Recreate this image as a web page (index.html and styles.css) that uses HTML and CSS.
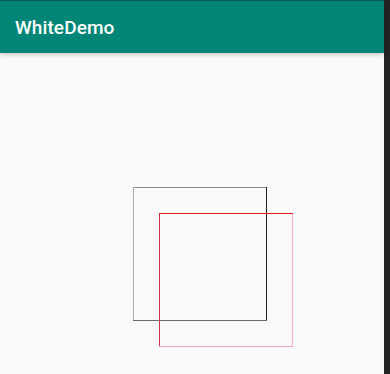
FILE: index.html
```html
<!DOCTYPE html>
<html lang="en">
<head>
  <meta charset="UTF-8" />
  <meta name="viewport" content="width=device-width, initial-scale=1.0" />
  <title>WhiteDemo</title>
  <link rel="stylesheet" href="styles.css">
</head>
<body>
  <div class="screen">
    <div class="app">
      <div class="statusline"></div>
      <header class="toolbar">
        <h1>WhiteDemo</h1>
      </header>
      <main class="canvas">
        <svg width="384" height="321" viewBox="0 0 384 321" shape-rendering="crispEdges">
          <!-- black square -->
          <line x1="133" y1="134.5" x2="267" y2="134.5" stroke="#8a8a8a" />
          <line x1="133.5" y1="134" x2="133.5" y2="268" stroke="#a8a8a8" />
          <line x1="266.5" y1="134" x2="266.5" y2="268" stroke="#1e1e1e" />
          <line x1="133" y1="267.5" x2="267" y2="267.5" stroke="#6a6a6a" />
          <!-- red square -->
          <line x1="159.5" y1="160" x2="159.5" y2="294" stroke="#cc3344" />
          <line x1="292.5" y1="160" x2="292.5" y2="294" stroke="#f6b0b8" />
          <line x1="159" y1="293.5" x2="293" y2="293.5" stroke="#f2a6b2" />
          <line x1="159" y1="160.5" x2="293" y2="160.5" stroke="#dd1a22" />
        </svg>
      </main>
    </div>
    <div class="edge"></div>
  </div>
</body>
</html>
```

FILE: styles.css
```css
body { margin: 0; background: #fafafa; font-family: Roboto, "Liberation Sans", sans-serif; overflow: hidden; }
.screen { display: flex; width: 390px; height: 374px; }
.app { width: 384px; display: flex; flex-direction: column; background: #fafafa; }
.statusline { height: 1px; background: #0b5a55; }
.toolbar {
  height: 52px; background: #008577; display: flex; align-items: center;
  padding-left: 15px; box-shadow: 0 2px 4px rgba(0,0,0,0.18); position: relative; z-index: 1;
}
.toolbar h1 { margin: 0; color: #fff; font-size: 19px; font-weight: 500; letter-spacing: 0.1px; }
.canvas { flex: 1; }
.canvas svg { display: block; }
.edge { width: 6px; background: #232323; }
```
